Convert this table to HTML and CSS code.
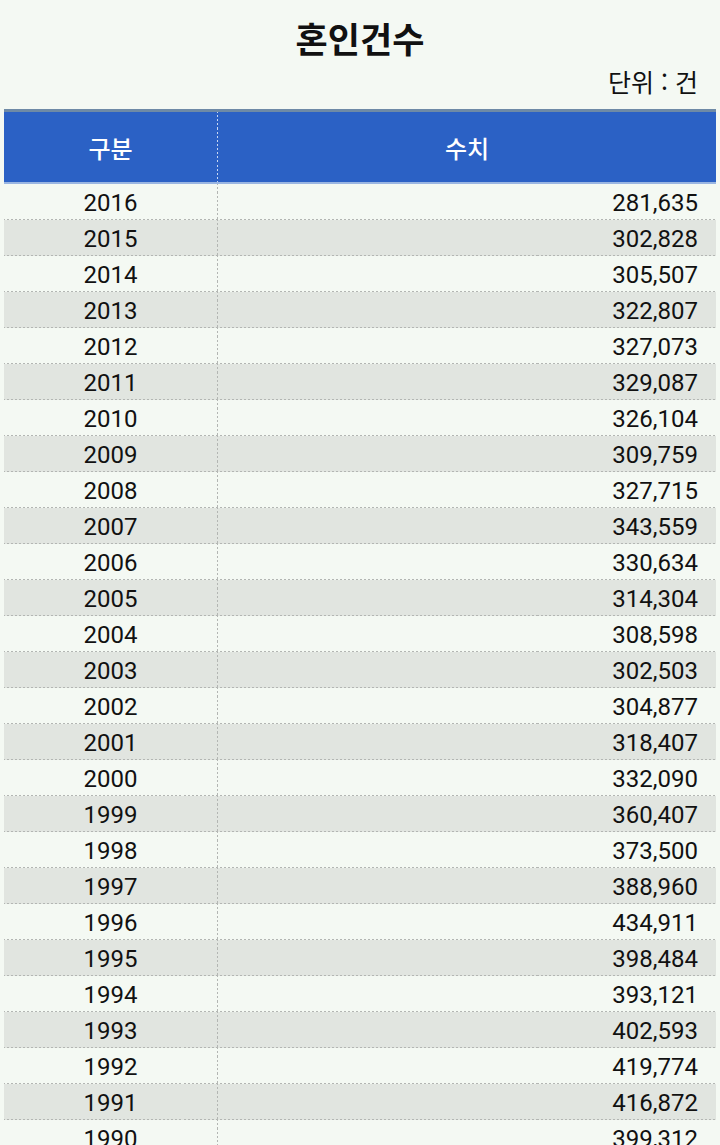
FILE: index.html
```html
<!DOCTYPE html>
<html lang="ko">
<head>
<meta charset="utf-8">
<link rel="stylesheet" href="styles.css">
</head>
<body>
<h1 class="title">혼인건수</h1>
<div class="unit">단위 : 건</div>
<div class="table">
  <div class="row head"><div class="cell c1">구분</div><div class="cell c2">수치</div></div>
  <div class="row"><div class="cell c1">2016</div><div class="cell c2 num">281,635</div></div>
  <div class="row alt"><div class="cell c1">2015</div><div class="cell c2 num">302,828</div></div>
  <div class="row"><div class="cell c1">2014</div><div class="cell c2 num">305,507</div></div>
  <div class="row alt"><div class="cell c1">2013</div><div class="cell c2 num">322,807</div></div>
  <div class="row"><div class="cell c1">2012</div><div class="cell c2 num">327,073</div></div>
  <div class="row alt"><div class="cell c1">2011</div><div class="cell c2 num">329,087</div></div>
  <div class="row"><div class="cell c1">2010</div><div class="cell c2 num">326,104</div></div>
  <div class="row alt"><div class="cell c1">2009</div><div class="cell c2 num">309,759</div></div>
  <div class="row"><div class="cell c1">2008</div><div class="cell c2 num">327,715</div></div>
  <div class="row alt"><div class="cell c1">2007</div><div class="cell c2 num">343,559</div></div>
  <div class="row"><div class="cell c1">2006</div><div class="cell c2 num">330,634</div></div>
  <div class="row alt"><div class="cell c1">2005</div><div class="cell c2 num">314,304</div></div>
  <div class="row"><div class="cell c1">2004</div><div class="cell c2 num">308,598</div></div>
  <div class="row alt"><div class="cell c1">2003</div><div class="cell c2 num">302,503</div></div>
  <div class="row"><div class="cell c1">2002</div><div class="cell c2 num">304,877</div></div>
  <div class="row alt"><div class="cell c1">2001</div><div class="cell c2 num">318,407</div></div>
  <div class="row"><div class="cell c1">2000</div><div class="cell c2 num">332,090</div></div>
  <div class="row alt"><div class="cell c1">1999</div><div class="cell c2 num">360,407</div></div>
  <div class="row"><div class="cell c1">1998</div><div class="cell c2 num">373,500</div></div>
  <div class="row alt"><div class="cell c1">1997</div><div class="cell c2 num">388,960</div></div>
  <div class="row"><div class="cell c1">1996</div><div class="cell c2 num">434,911</div></div>
  <div class="row alt"><div class="cell c1">1995</div><div class="cell c2 num">398,484</div></div>
  <div class="row"><div class="cell c1">1994</div><div class="cell c2 num">393,121</div></div>
  <div class="row alt"><div class="cell c1">1993</div><div class="cell c2 num">402,593</div></div>
  <div class="row"><div class="cell c1">1992</div><div class="cell c2 num">419,774</div></div>
  <div class="row alt"><div class="cell c1">1991</div><div class="cell c2 num">416,872</div></div>
  <div class="row"><div class="cell c1">1990</div><div class="cell c2 num">399,312</div></div>
</div>
</body>
</html>
```
FILE: styles.css
```css
html, body {
  margin: 0;
  padding: 0;
  background: #f4f9f3;
  font-family: Roboto, "Noto Sans CJK KR", sans-serif;
  color: #111;
}
.title {
  margin: 0;
  padding-top: 8px;
  height: 60px;
  line-height: 60px;
  font-size: 35px;
  font-weight: bold;
  text-align: center;
  font-family: "Noto Sans CJK KR", sans-serif;
}
.unit {
  height: 26px;
  line-height: 26px;
  font-size: 25px;
  text-align: right;
  padding-right: 22px;
  margin-bottom: 15px;
  font-family: "Noto Sans CJK KR", sans-serif;
}
.table {
  margin: 0 4px;
}
.row {
  display: grid;
  grid-template-columns: 214px 1fr;
  height: 36px;
  box-sizing: border-box;
  border-bottom: 1px solid #b3b6b3;
  border-image: repeating-linear-gradient(to right, #b3b6b3 0 2px, transparent 2px 4px) 1;
}
.row.alt {
  background: #e1e5e0;
}
.cell {
  display: flex;
  align-items: center;
  padding-top: 3px;
  font-size: 24px;
  box-sizing: border-box;
}
.c1 {
  justify-content: center;
  border-right: 1px solid #b3b6b3;
  border-image: repeating-linear-gradient(to bottom, #b3b6b3 0 2px, transparent 2px 4px) 1;
}
.c2 {
  justify-content: center;
}
.num {
  justify-content: flex-end;
  padding-right: 18px;
}
.row.head {
  height: 75px;
  background: #2b61c5;
  border-top: 3px solid #6e8aa6;
  border-bottom: 2px solid #9ab6e2;
  border-image: none;
  color: #fff;
  font-family: "Noto Sans CJK KR", sans-serif;
}
.row.head .cell {
  padding-top: 0;
  font-size: 24px;
  font-weight: 500;
}
.row.head .c1 {
  border-right: 1px solid #c9d7f2;
  border-image: repeating-linear-gradient(to bottom, #c9d7f2 0 2px, transparent 2px 4px) 1;
}
```
